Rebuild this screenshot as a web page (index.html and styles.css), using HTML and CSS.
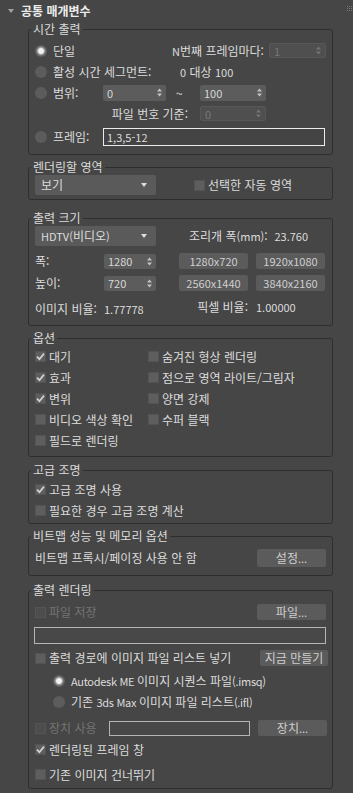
FILE: index.html
```html
<!DOCTYPE html>
<html lang="ko">
<head>
    <meta charset="UTF-8">
    <meta name="viewport" content="width=device-width, initial-scale=1.0">
    <title>공통 매개변수</title>
    <link rel="stylesheet" href="styles.css">
</head>
<body>

    <div class="head">
        <span class="tri"></span>
        <h1>공통 매개변수</h1>
        <svg class="grip" width="5" height="5" viewBox="0 0 5 5">
            <rect x="0" y="0" width="1" height="1"/><rect x="2" y="0" width="1" height="1"/><rect x="4" y="0" width="1" height="1"/>
            <rect x="0" y="2" width="1" height="1"/><rect x="2" y="2" width="1" height="1"/><rect x="4" y="2" width="1" height="1"/>
            <rect x="0" y="4" width="1" height="1"/><rect x="2" y="4" width="1" height="1"/><rect x="4" y="4" width="1" height="1"/>
        </svg>
    </div>

    <!-- 시간 출력 -->
    <fieldset class="grp g-time">
        <legend>시간 출력</legend>
        <div class="row first">
            <label class="opt t-single"><i class="radio on"></i>단일</label>
            <span class="t-nth"><span class="lat">N</span>번째 프레임마다:</span>
            <div class="spin off t-nth-spin"><span>1</span><svg width="5" height="9" viewBox="0 0 5 9"><path d="M0 3.5L2.5 0.5L5 3.5Z M0 5.5L2.5 8.5L5 5.5Z"/></svg></div>
        </div>
        <div class="row">
            <label class="opt t-active"><i class="radio"></i>활성 시간 세그먼트:</label>
            <span><span class="lat">0</span> 대상 <span class="lat">100</span></span>
        </div>
        <div class="row">
            <label class="opt t-range"><i class="radio"></i>범위:</label>
            <div class="spin t-from"><span>0</span><svg width="5" height="9" viewBox="0 0 5 9"><path d="M0 3.5L2.5 0.5L5 3.5Z M0 5.5L2.5 8.5L5 5.5Z"/></svg></div>
            <span class="t-tilde">~</span>
            <div class="spin t-to"><span>100</span><svg width="5" height="9" viewBox="0 0 5 9"><path d="M0 3.5L2.5 0.5L5 3.5Z M0 5.5L2.5 8.5L5 5.5Z"/></svg></div>
        </div>
        <div class="row">
            <span class="t-base">파일 번호 기준:</span>
            <div class="spin off t-to"><span>0</span><svg width="5" height="9" viewBox="0 0 5 9"><path d="M0 3.5L2.5 0.5L5 3.5Z M0 5.5L2.5 8.5L5 5.5Z"/></svg></div>
        </div>
        <div class="row tall">
            <label class="opt t-range"><i class="radio"></i>프레임:</label>
            <div class="field focus t-frames">1,3,5-12</div>
        </div>
    </fieldset>

    <!-- 렌더링할 영역 -->
    <fieldset class="grp g-area">
        <legend>렌더링할 영역</legend>
        <div class="area-grid">
            <div class="drop"><span>보기</span><i class="arrow"></i></div>
            <label class="opt"><i class="cb"></i>선택한 자동 영역</label>
        </div>
    </fieldset>

    <!-- 출력 크기 -->
    <fieldset class="grp g-size">
        <legend>출력 크기</legend>
        <div class="row size-top">
            <div class="drop"><span><span class="lat">HDTV(</span>비디오<span class="lat">)</span></span><i class="arrow"></i></div>
            <span class="aperture">조리개 폭<span class="lat">(mm)</span>:&nbsp; <span class="lat">23.760</span></span>
        </div>
        <div class="size-grid">
            <span>폭:</span>
            <div class="spin s-spin"><span>1280</span><svg width="5" height="9" viewBox="0 0 5 9"><path d="M0 3.5L2.5 0.5L5 3.5Z M0 5.5L2.5 8.5L5 5.5Z"/></svg></div>
            <button class="btn">1280x720</button>
            <button class="btn">1920x1080</button>
            <span>높이:</span>
            <div class="spin s-spin"><span>720</span><svg width="5" height="9" viewBox="0 0 5 9"><path d="M0 3.5L2.5 0.5L5 3.5Z M0 5.5L2.5 8.5L5 5.5Z"/></svg></div>
            <button class="btn">2560x1440</button>
            <button class="btn">3840x2160</button>
        </div>
        <div class="size-grid ratio">
            <span>이미지 비율:</span>
            <span class="lat">1.77778</span>
            <span class="px-label">픽셀 비율:</span>
            <span class="lat px-value">1.00000</span>
        </div>
    </fieldset>

    <!-- 옵션 -->
    <fieldset class="grp g-opts">
        <legend>옵션</legend>
        <div class="opt-grid">
            <label class="opt"><i class="cb"><svg width="9" height="9" viewBox="0 0 9 9"><path d="M1 4.6L3.4 7.2L8 1.6"/></svg></i>대기</label>
            <label class="opt"><i class="cb"></i>숨겨진 형상 렌더링</label>
            <label class="opt"><i class="cb"><svg width="9" height="9" viewBox="0 0 9 9"><path d="M1 4.6L3.4 7.2L8 1.6"/></svg></i>효과</label>
            <label class="opt"><i class="cb"></i>점으로 영역 라이트/그림자</label>
            <label class="opt"><i class="cb"><svg width="9" height="9" viewBox="0 0 9 9"><path d="M1 4.6L3.4 7.2L8 1.6"/></svg></i>변위</label>
            <label class="opt"><i class="cb"></i>양면 강제</label>
            <label class="opt"><i class="cb"></i>비디오 색상 확인</label>
            <label class="opt"><i class="cb"></i>수퍼 블랙</label>
            <label class="opt"><i class="cb"></i>필드로 렌더링</label>
        </div>
    </fieldset>

    <!-- 고급 조명 -->
    <fieldset class="grp g-light">
        <legend>고급 조명</legend>
        <div class="row first">
            <label class="opt"><i class="cb"><svg width="9" height="9" viewBox="0 0 9 9"><path d="M1 4.6L3.4 7.2L8 1.6"/></svg></i>고급 조명 사용</label>
        </div>
        <div class="row">
            <label class="opt"><i class="cb"></i>필요한 경우 고급 조명 계산</label>
        </div>
    </fieldset>

    <!-- 비트맵 성능 및 메모리 옵션 -->
    <fieldset class="grp g-bitmap">
        <legend>비트맵 성능 및 메모리 옵션</legend>
        <div class="row first">
            <span>비트맵 프록시/페이징 사용 안 함</span>
            <button class="btn tall-btn push">설정<span class="lat">...</span></button>
        </div>
    </fieldset>

    <!-- 출력 렌더링 -->
    <fieldset class="grp g-out">
        <legend>출력 렌더링</legend>
        <div class="row out-save">
            <label class="opt dim"><i class="cb off"></i>파일 저장</label>
            <button class="btn push">파일<span class="lat">...</span></button>
        </div>
        <div class="field out-path"></div>
        <div class="row out-list">
            <label class="opt"><i class="cb"></i>출력 경로에 이미지 파일 리스트 넣기</label>
            <button class="btn push now-btn">지금 만들기</button>
        </div>
        <div class="row out-radio first-radio">
            <label class="opt"><i class="radio on"></i><span class="lat narrow">Autodesk ME&nbsp;</span>이미지 시퀀스 파일<span class="lat narrow">(.imsq)</span></label>
        </div>
        <div class="row out-radio">
            <label class="opt"><i class="radio"></i>기존&nbsp;<span class="lat narrow">3ds Max&nbsp;</span>이미지 파일 리스트<span class="lat narrow">(.ifl)</span></label>
        </div>
        <div class="row out-device">
            <label class="opt dim dev-label"><i class="cb off"></i>장치 사용</label>
            <div class="field dev-field"></div>
            <button class="btn push dev-btn">장치<span class="lat">...</span></button>
        </div>
        <div class="row out-frame">
            <label class="opt"><i class="cb"><svg width="9" height="9" viewBox="0 0 9 9"><path d="M1 4.6L3.4 7.2L8 1.6"/></svg></i>렌더링된 프레임 창</label>
        </div>
        <div class="row out-skip">
            <label class="opt"><i class="cb"></i>기존 이미지 건너뛰기</label>
        </div>
    </fieldset>

</body>
</html>
```

FILE: styles.css
```css
* {
    box-sizing: border-box;
}
body {
    margin: 0;
    background-color: #464646;
    color: #dcdcdc;
    font-family: "Noto Sans CJK KR", "Noto Sans", sans-serif;
    font-size: 12px;
    line-height: 14px;
}
/* latin runs are a touch smaller than the hangul */
.lat {
    font-size: 11px;
}
.lat.narrow {
    letter-spacing: -0.3px;
}

/* rollout header */
.head {
    display: flex;
    align-items: center;
    height: 22px;
    padding-left: 8px;
}
.head .tri {
    width: 0;
    height: 0;
    border-left: 3px solid transparent;
    border-right: 3px solid transparent;
    border-top: 4px solid #a0a0a0;
}
.head h1 {
    margin: 0 0 0 7px;
    font-size: 12px;
    font-weight: bold;
    color: #ececec;
}
.head .grip {
    margin-left: auto;
    margin-right: 1px;
    align-self: flex-start;
    margin-top: 6px;
    fill: #7a7a7a;
}

/* group boxes */
.grp {
    margin: 5px 20px 0 28px;
    padding: 0 6px 4px 6px;
    border: 1px solid #2e2e2e;
    border-radius: 3px;
    min-width: 0;
}
.grp legend {
    padding: 0 2px;
    margin-left: -4px;
    line-height: 14px;
}
.g-time { margin-top: 0; }
.g-size { margin-top: 11px; padding-bottom: 6px; }
.g-opts { padding-bottom: 5px; }
.g-light { margin-top: 6px; padding-bottom: 2px; }
.g-bitmap { padding-bottom: 7px; }
.g-out { margin-top: 7px; padding-bottom: 3px; }

.row {
    display: flex;
    align-items: center;
    height: 21px;
}
.row > * { flex: none; }
.row.tall { height: 26px; }
.g-time .first { margin-top: 4px; }
.g-light .first { margin-top: 2px; }
.g-bitmap .first { margin-top: 4px; }

.opt {
    display: flex;
    align-items: center;
    white-space: nowrap;
}
.dim { color: #747474; }

/* controls */
.radio {
    flex: none;
    width: 12px;
    height: 12px;
    margin-right: 6px;
    border-radius: 50%;
    background: #5c5c5c;
}
.radio.on {
    background: radial-gradient(circle, #f2f2f2 0 2.4px, #a6a6a6 3.4px, #606060 5px);
}
.cb {
    flex: none;
    display: flex;
    align-items: center;
    justify-content: center;
    width: 11px;
    height: 11px;
    margin-right: 3px;
    background: #5e5e5e;
    border: 1px solid #535353;
}
.cb svg {
    fill: none;
    stroke: #d2d2d2;
    stroke-width: 1.7;
}
.cb.off {
    background: #4d4d4d;
    border-color: #555;
}
.spin {
    display: flex;
    align-items: center;
    justify-content: space-between;
    height: 16px;
    padding: 0 4px 0 4px;
    background: #5c5c5c;
    border-radius: 2px;
    color: #d8d8d8;
    font-size: 11px;
}
.spin svg { fill: #c4c4c4; }
.spin.off {
    height: 15px;
    background: #4f4f4f;
    border: 1px solid #575757;
    color: #787878;
}
.spin.off svg { fill: #747474; }
.drop {
    display: flex;
    align-items: center;
    justify-content: space-between;
    width: 121px;
    max-width: 121px;
    height: 20px;
    padding: 0 9px 0 6px;
    background: #5a5a5a;
    border-radius: 2px;
}
.drop .arrow {
    width: 0;
    height: 0;
    border-left: 3px solid transparent;
    border-right: 3px solid transparent;
    border-top: 4px solid #dedede;
}
.btn {
    width: 69px;
    height: 16px;
    padding: 0;
    border: none;
    border-radius: 2px;
    background: #5b5b5b;
    color: #cfcfcf;
    font: inherit;
    line-height: 14px;
}
.btn.tall-btn { height: 18px; }
.row > .push { margin-left: auto; }
.field {
    display: flex;
    align-items: center;
    height: 18px;
    padding-left: 3px;
    border: 1px solid #b4b4b4;
    background: #484848;
    font-size: 11px;
}
.field.focus {
    border-color: #ececec;
    background: #444;
}

/* 시간 출력 */
.t-single { width: 137px; }
.t-nth { width: 97px; }
.t-nth-spin { width: 57px; }
.t-active { width: 145px; }
.t-range { width: 68px; }
.t-from { width: 63px; }
.t-tilde { width: 34px; padding-left: 10px; }
.t-to { width: 66px; }
.t-base { width: 165px; padding-right: 12px; text-align: right; }
.t-frames { width: 222px; }

/* 렌더링할 영역 */
.area-grid {
    display: grid;
    grid-template-columns: 159px 1fr;
    grid-template-rows: 20px;
    align-items: center;
    margin-top: 1px;
}

/* 출력 크기 */
.size-top { height: 20px; margin-top: 1px; }
.aperture { margin-left: 33px; }
.size-grid {
    display: grid;
    grid-template-columns: 69px 52px 92px 77px;
    grid-auto-rows: 20px;
    row-gap: 2px;
    align-items: center;
    margin-top: 5px;
}
.size-grid .btn {
    justify-self: end;
    font-size: 11px;
}
.s-spin { height: 15px; }
.size-grid.ratio { margin-top: 6px; }
.px-label { text-align: right; margin-bottom: 4px; }
.px-value { padding-left: 8px; margin-bottom: 4px; }

/* 옵션 */
.opt-grid {
    display: grid;
    grid-template-columns: 113px 1fr;
    grid-auto-rows: 21px;
    align-items: center;
    margin-top: 1px;
}

/* 출력 렌더링 */
.out-save { height: 20px; margin-top: 5px; }
.out-path { height: 17px; margin: 5px 0 0 -1px; }
.out-list { height: 20px; margin-top: 4px; }
.now-btn { width: 68px; margin-right: -2px; }
.out-radio { padding-left: 18px; }
.first-radio { margin-top: 2px; }
.out-device { height: 20px; margin-top: 6px; }
.dev-label { width: 74px; }
.dev-field { width: 141px; height: 15px; }
.dev-btn { margin-right: -1px; }
.out-frame { margin-top: 1px; }
.out-skip { margin-top: 4px; }
```
